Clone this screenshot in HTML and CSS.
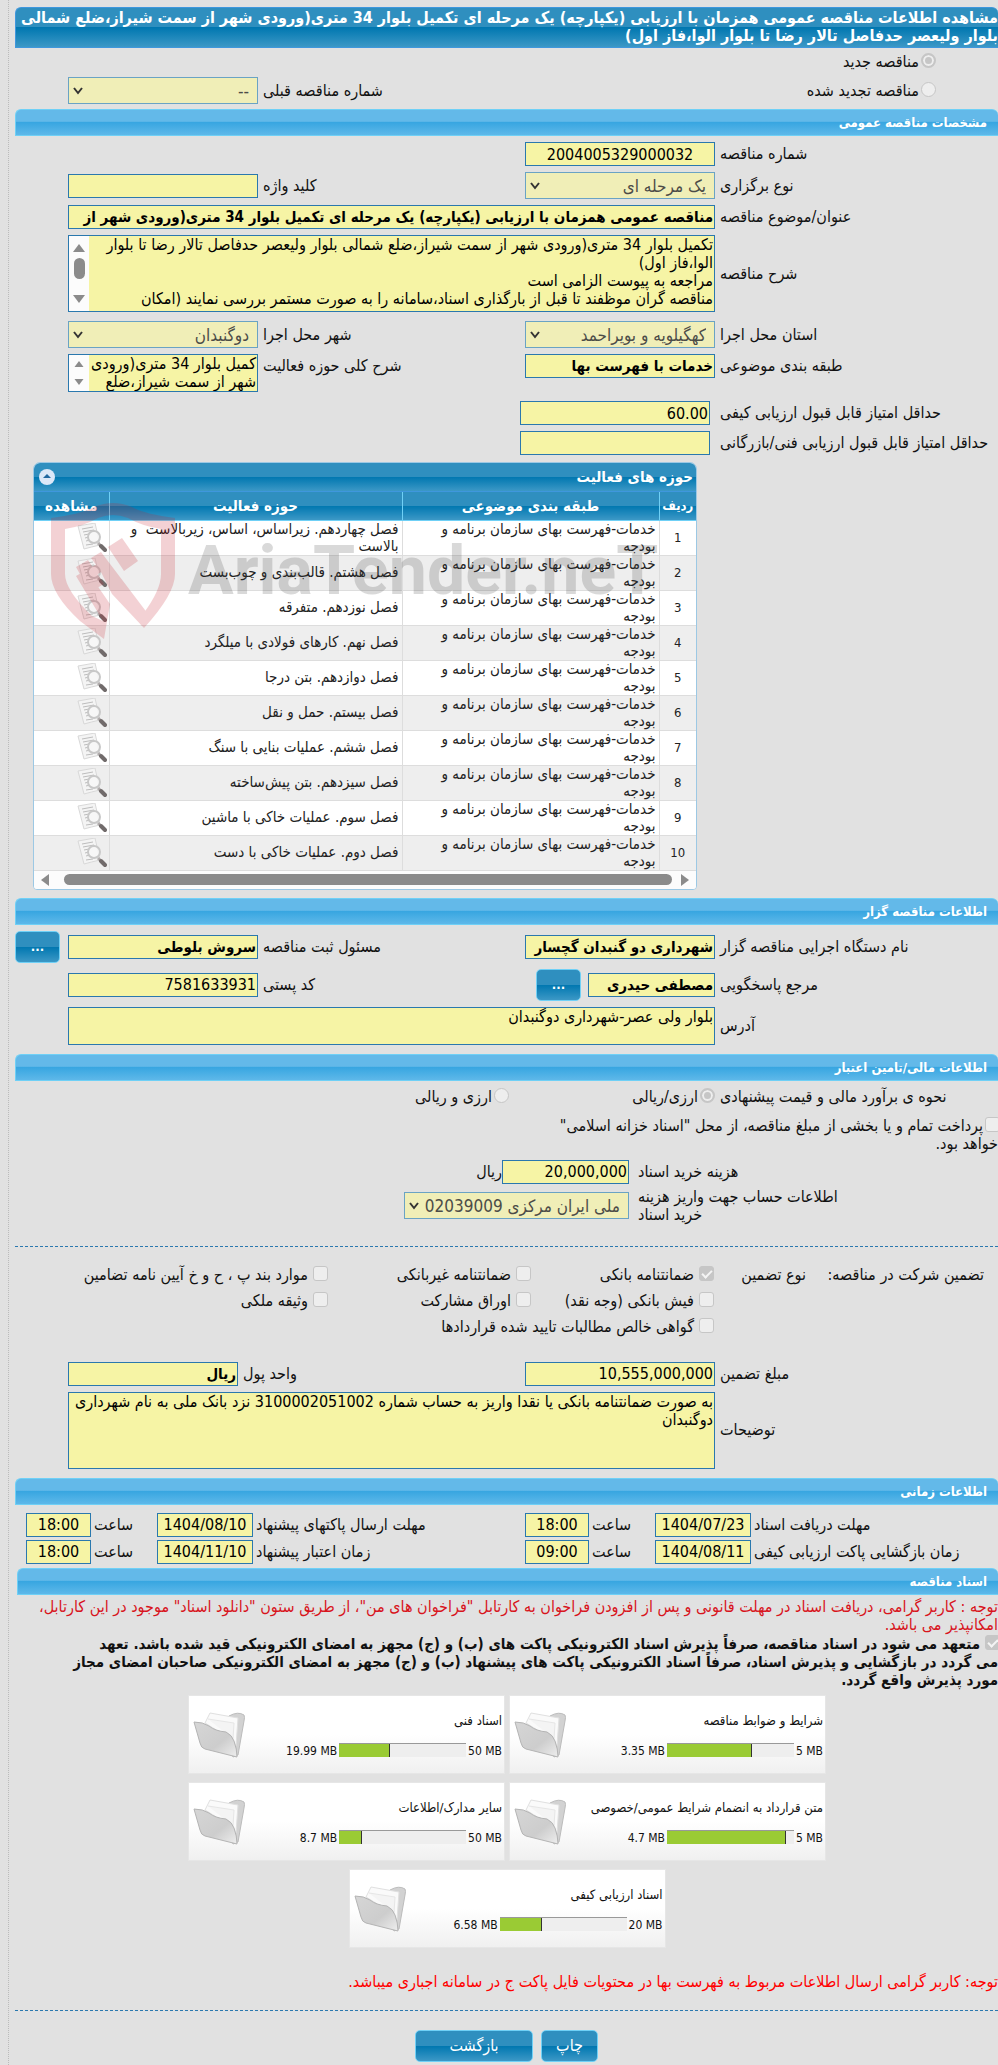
FILE: index.html
```html
<!doctype html>
<html lang="fa" dir="rtl">
    <head>
        <meta charset="utf-8">
        <title>مشاهده اطلاعات مناقصه</title>
        <link rel="stylesheet" href="styles.css">
    </head>

    <body>

        <svg class="defs" aria-hidden="true">
            <defs>
                <linearGradient id="g-folder" x1="0" y1="0" x2="1" y2="1">
                    <stop offset="0" stop-color="#d6d6d6"/>
                    <stop offset="0.6" stop-color="#cdcdcd"/>
                    <stop offset="1" stop-color="#eee"/>
                </linearGradient>
                <symbol id="i-view" viewBox="0 0 30 30">
                    <path d="M1 3 L18 0 L23 22 Q14 24 7 26 Z" fill="#f4f4f4" stroke="#d8d8d8"/>
                    <path d="M5 6 L16 4 M6 9 L17 7 M7 12 L12 11 M8 15 L12 14 M9 18 L13 17 M9 22 L16 21" stroke="#bdbdbd" fill="none"/>
                    <circle cx="17" cy="14" r="6" fill="#f8f8f8" fill-opacity=".8" stroke="#c8c8c8" stroke-width="2"/>
                    <path d="M21 20 L24 23" stroke="#b0acac" stroke-width="3"/>
                    <path d="M24 23 L28 27" stroke="#716b6b" stroke-width="4" stroke-linecap="round"/>
                </symbol>
                <symbol id="i-folder" viewBox="0 0 54 48">
                    <path d="M36 5 Q45 0 51 4 Q52 6 51 10 L45 44 L40 46 L30 20 Z" fill="#d2d2d2" stroke="#bcbcbc"/>
                    <path d="M12 12 L17 2 L45 7 L43 35 L38 28 Z" fill="#fafafa" stroke="#e0e0e0"/>
                    <path d="M15 8 L41 12 L40 28" fill="#f4f4f4" stroke="#e6e6e6"/>
                    <path d="M1 11 Q10 11 16 15 Q22 20 33 21 Q39 24 41 30 Q44 38 44 46 L12 38 Q8 37 7 32 Z" fill="url(#g-folder)" stroke="#b4b4b4"/>
                </symbol>
                <symbol id="i-arrow" viewBox="0 0 12 8">
                    <path d="M2 1 L6 6 L10 1" fill="none" stroke="#333" stroke-width="2"/>
                </symbol>
                <symbol id="i-up" viewBox="0 0 12 8">
                    <path d="M0 8 L6 0 L12 8 Z" fill="#8b8b8b"/>
                </symbol>
                <symbol id="i-down" viewBox="0 0 12 8">
                    <path d="M0 0 L6 8 L12 0 Z" fill="#8b8b8b"/>
                </symbol>
            </defs>
        </svg>

        <div id="sayfa">
            <h1 class="title">مشاهده اطلاعات مناقصه عمومی همزمان با ارزیابی (یکپارچه) یک مرحله ای تکمیل بلوار 34 متری(ورودی شهر از سمت شیراز،ضلع شمالی بلوار ولیعصر حدفاصل تالار رضا تا بلوار الوا،فاز اول)</h1>

            <div class="kind">
                <label class="radio"><input type="radio" name="kind" checked disabled>مناقصه جدید</label>
            </div>
            <div class="row kind2">
                <label class="radio"><input type="radio" name="kind" disabled>مناقصه تجدید شده</label>
                <label class="lb2" for="prev">شماره مناقصه قبلی</label>
                <div class="sel"><select id="prev" disabled><option>--</option></select><svg><use href="#i-arrow"/></svg></div>
            </div>

            <h2 class="bar">مشخصات مناقصه عمومی</h2>
            <div class="form">
                <div class="row">
                    <label class="lb" for="no">شماره مناقصه</label>
                    <input class="center" id="no" value="2004005329000032" readonly>
                </div>
                <div class="row">
                    <label class="lb" for="type">نوع برگزاری</label>
                    <div class="sel"><select id="type" disabled><option>یک مرحله ای</option></select><svg><use href="#i-arrow"/></svg></div>
                    <label class="lb2" for="key">کلید واژه</label>
                    <input id="key" readonly>
                </div>
                <div class="row">
                    <label class="lb" for="subject">عنوان/موضوع مناقصه</label>
                    <input class="wide strong" id="subject" value="مناقصه عمومی همزمان با ارزیابی (یکپارچه) یک مرحله ای تکمیل بلوار 34 متری(ورودی شهر از" readonly>
                </div>
                <div class="row gap-b">
                    <label class="lb" for="desc">شرح مناقصه</label>
                    <div class="scrolled tall wide">
                        <textarea id="desc" readonly>تکمیل بلوار 34 متری(ورودی شهر از سمت شیراز،ضلع شمالی بلوار ولیعصر حدفاصل تالار رضا تا بلوار الوا،فاز اول)
مراجعه به پیوست الزامی است
مناقصه گران موظفند تا قبل از بارگذاری اسناد،سامانه را به صورت مستمر بررسی نمایند (امکان</textarea>
                        <div class="track"><svg><use href="#i-up"/></svg><i></i><svg><use href="#i-down"/></svg></div>
                    </div>
                </div>
                <div class="row">
                    <label class="lb" for="state">استان محل اجرا</label>
                    <div class="sel"><select id="state" disabled><option>کهگیلویه و بویراحمد</option></select><svg><use href="#i-arrow"/></svg></div>
                    <label class="lb2" for="city">شهر محل اجرا</label>
                    <div class="sel"><select id="city" disabled><option>دوگنبدان</option></select><svg><use href="#i-arrow"/></svg></div>
                </div>
                <div class="row top gap-b">
                    <label class="lb" for="cat">طبقه بندی موضوعی</label>
                    <input class="strong" id="cat" value="خدمات با فهرست بها" readonly>
                    <label class="lb2" for="field">شرح کلی حوزه فعالیت</label>
                    <div class="scrolled short">
                        <textarea id="field" readonly>کمیل بلوار 34 متری(ورودی شهر از سمت شیراز،ضلع</textarea>
                        <div class="track small"><svg><use href="#i-up"/></svg><svg><use href="#i-down"/></svg></div>
                    </div>
                </div>
                <div class="row score">
                    <label class="lb" for="q1">حداقل امتیاز قابل قبول ارزیابی کیفی</label>
                    <input id="q1" value="60.00" readonly>
                </div>
                <div class="row score">
                    <label class="lb" for="q2">حداقل امتیاز قابل قبول ارزیابی فنی/بازرگانی</label>
                    <input id="q2" readonly>
                </div>
            </div>

            <div class="grid">
                <div class="grid-title">
                    <span>حوزه های فعالیت</span>
                    <button class="fold" aria-label="بستن"><svg viewBox="0 0 16 16"><path d="M4 9 L8 5 L12 9 Z" fill="#2268a0"/></svg></button>
                </div>
                <table>
                    <thead>
                        <tr><th class="t-no">ردیف</th><th class="t-cat">طبقه بندی موضوعی</th><th>حوزه فعالیت</th><th class="t-view">مشاهده</th></tr>
                    </thead>
                    <tbody>
                        <tr><td>1</td><td>خدمات-فهرست بهای سازمان برنامه و بودجه</td><td>فصل چهاردهم. زیراساس، اساس، زیربالاست &nbsp;و بالاست</td><td><svg><use href="#i-view"/></svg></td></tr>
                        <tr><td>2</td><td>خدمات-فهرست بهای سازمان برنامه و بودجه</td><td>فصل هشتم. قالب‌بندی و چوب‌بست</td><td><svg><use href="#i-view"/></svg></td></tr>
                        <tr><td>3</td><td>خدمات-فهرست بهای سازمان برنامه و بودجه</td><td>فصل نوزدهم. متفرقه</td><td><svg><use href="#i-view"/></svg></td></tr>
                        <tr><td>4</td><td>خدمات-فهرست بهای سازمان برنامه و بودجه</td><td>فصل نهم. کارهای فولادی با میلگرد</td><td><svg><use href="#i-view"/></svg></td></tr>
                        <tr><td>5</td><td>خدمات-فهرست بهای سازمان برنامه و بودجه</td><td>فصل دوازدهم. بتن درجا</td><td><svg><use href="#i-view"/></svg></td></tr>
                        <tr><td>6</td><td>خدمات-فهرست بهای سازمان برنامه و بودجه</td><td>فصل بیستم. حمل و نقل</td><td><svg><use href="#i-view"/></svg></td></tr>
                        <tr><td>7</td><td>خدمات-فهرست بهای سازمان برنامه و بودجه</td><td>فصل ششم. عملیات بنایی با سنگ</td><td><svg><use href="#i-view"/></svg></td></tr>
                        <tr><td>8</td><td>خدمات-فهرست بهای سازمان برنامه و بودجه</td><td>فصل سیزدهم. بتن پیش‌ساخته</td><td><svg><use href="#i-view"/></svg></td></tr>
                        <tr><td>9</td><td>خدمات-فهرست بهای سازمان برنامه و بودجه</td><td>فصل سوم. عملیات خاکی با ماشین</td><td><svg><use href="#i-view"/></svg></td></tr>
                        <tr><td>10</td><td>خدمات-فهرست بهای سازمان برنامه و بودجه</td><td>فصل دوم. عملیات خاکی با دست</td><td><svg><use href="#i-view"/></svg></td></tr>
                    </tbody>
                </table>
                <div class="hscroll">
                    <svg viewBox="0 0 8 12"><path d="M0 0 L8 6 L0 12 Z" fill="#8b8b8b"/></svg>
                    <i></i>
                    <svg viewBox="0 0 8 12"><path d="M8 0 L0 6 L8 12 Z" fill="#8b8b8b"/></svg>
                </div>
                <!-- watermark over the table -->
                <div class="mark">
                    <svg viewBox="0 0 126 138">
                        <path fill="#c8202c" fill-rule="evenodd" d="M1 16 Q32 12 44 5 Q63 -3 82 5 Q94 12 125 16 V72 Q125 92 94 126 L62 92 L51 70 L42 76 L60 102 L54 137 L30 119 Q1 92 1 72 Z M15 27 V72 Q15 88 42 114 L53 119 L26 74 L47 62 L66 82 L93 112 Q111 88 111 72 V27 Q92 24 78 16 Q63 10 48 16 Q34 24 15 27 Z"/>
                        <path fill="#c8202c" d="M58 45 L72 36 L88 59 L74 69 Z M41 56 L51 50 L98 112 L92 124 Z M26 65 L38 58 L54 82 L40 90 Z"/>
                    </svg>
                    <span dir="ltr">AriaTender.neT</span>
                </div>
            </div>

            <h2 class="bar">اطلاعات مناقصه گزار</h2>
            <div class="form">
                <div class="row">
                    <label class="lb" for="org">نام دستگاه اجرایی مناقصه گزار</label>
                    <input class="strong" id="org" value="شهرداری دو گنبدان گچسار" readonly>
                    <label class="lb2" for="owner">مسئول ثبت مناقصه</label>
                    <input class="strong" id="owner" value="سروش بلوطی" readonly>
                    <button class="dots">...</button>
                </div>
                <div class="row">
                    <label class="lb" for="ref">مرجع پاسخگویی</label>
                    <div class="pair"><input class="strong" id="ref" value="مصطفی حیدری" readonly><button class="dots">...</button></div>
                    <label class="lb2" for="post">کد پستی</label>
                    <input id="post" value="7581633931" readonly>
                </div>
                <div class="row gap-b">
                    <label class="lb" for="addr">آدرس</label>
                    <textarea class="short wide" id="addr" readonly>بلوار ولی عصر-شهرداری دوگنبدان</textarea>
                </div>
            </div>

            <h2 class="bar">اطلاعات مالی/تامین اعتبار</h2>
            <div class="row money">
                <span class="lb">نحوه ی برآورد مالی و قیمت پیشنهادی</span>
                <label class="radio"><input type="radio" name="cur" checked disabled>ارزی/ریالی</label>
                <label class="radio"><input type="radio" name="cur" disabled>ارزی و ریالی</label>
            </div>
            <label class="treasury"><input type="checkbox" disabled>پرداخت تمام و یا بخشی از مبلغ مناقصه، از محل "اسناد خزانه اسلامی" خواهد بود.</label>
            <div class="cost">
                <label for="price">هزینه خرید اسناد</label>
                <div class="pair tight"><input id="price" value="20,000,000" readonly><span>ریال</span></div>
                <label for="acc">اطلاعات حساب جهت واریز هزینه خرید اسناد</label>
                <div class="sel"><select id="acc" disabled><option>ملی ایران مرکزی 02039009</option></select><svg><use href="#i-arrow"/></svg></div>
            </div>
            <hr>

            <div class="guarantee">
                <span class="g-title">تضمین شرکت در مناقصه:</span>
                <span class="g-kind">نوع تضمین</span>
                <div class="checks">
                    <label><input type="checkbox" checked disabled>ضمانتنامه بانکی</label>
                    <label><input type="checkbox" disabled>ضمانتنامه غیربانکی</label>
                    <label><input type="checkbox" disabled>موارد بند پ ، ح و خ آیین نامه تضامین</label>
                    <label><input type="checkbox" disabled>فیش بانکی (وجه نقد)</label>
                    <label><input type="checkbox" disabled>اوراق مشارکت</label>
                    <label><input type="checkbox" disabled>وثیقه ملکی</label>
                    <label class="all"><input type="checkbox" disabled>گواهی خالص مطالبات تایید شده قراردادها</label>
                </div>
            </div>
            <div class="form">
                <div class="row unit">
                    <label class="lb" for="amount">مبلغ تضمین</label>
                    <input id="amount" value="10,555,000,000" readonly>
                    <label class="lb2" for="unit">واحد پول</label>
                    <input class="strong" id="unit" value="ریال" readonly>
                </div>
                <div class="row gap-b">
                    <label class="lb" for="note">توضیحات</label>
                    <textarea class="tall wide" id="note" readonly>به صورت ضمانتنامه بانکی یا نقدا واریز به حساب شماره 3100002051002 نزد بانک ملی به نام شهرداری دوگنبدان</textarea>
                </div>
            </div>

            <h2 class="bar">اطلاعات زمانی</h2>
            <div class="times">
                <label for="d1">مهلت دریافت اسناد</label><input id="d1" value="1404/07/23" readonly>
                <label for="h1">ساعت</label><input id="h1" value="18:00" readonly>
                <label for="d2">مهلت ارسال پاکتهای پیشنهاد</label><input id="d2" value="1404/08/10" readonly>
                <label for="h2">ساعت</label><input id="h2" value="18:00" readonly>
                <label for="d3">زمان بازگشایی پاکت ارزیابی کیفی</label><input id="d3" value="1404/08/11" readonly>
                <label for="h3">ساعت</label><input id="h3" value="09:00" readonly>
                <label for="d4">زمان اعتبار پیشنهاد</label><input id="d4" value="1404/11/10" readonly>
                <label for="h4">ساعت</label><input id="h4" value="18:00" readonly>
            </div>

            <h2 class="bar docs">اسناد مناقصه</h2>
            <p class="warn">توجه : کاربر گرامی، دریافت اسناد در مهلت قانونی و پس از افزودن فراخوان به کارتابل "فراخوان های من"، از طریق ستون "دانلود اسناد" موجود در این کارتابل، امکانپذیر می باشد.</p>
            <label class="promise"><input type="checkbox" checked disabled>متعهد می شود در اسناد مناقصه، صرفاً پذیرش اسناد الکترونیکی پاکت های (ب) و (ج) مجهز به امضای الکترونیکی قید شده باشد. تعهد<br>می گردد در بازگشایی و پذیرش اسناد، صرفاً اسناد الکترونیکی پاکت های پیشنهاد (ب) و (ج) مجهز به امضای الکترونیکی صاحبان امضای مجاز<br>مورد پذیرش واقع گردد.</label>

            <div class="files">
                <div class="file">
                    <div class="info"><a href="#">شرایط و ضوابط مناقصه</a><div class="size"><span>5 MB</span><div class="meter"><i style="width:67%"></i></div><span>3.35 MB</span></div></div>
                    <svg><use href="#i-folder"/></svg>
                </div>
                <div class="file">
                    <div class="info"><a href="#">اسناد فنی</a><div class="size"><span>50 MB</span><div class="meter"><i style="width:40%"></i></div><span>19.99 MB</span></div></div>
                    <svg><use href="#i-folder"/></svg>
                </div>
                <div class="file">
                    <div class="info"><a href="#">متن قرارداد به انضمام شرایط عمومی/خصوصی</a><div class="size"><span>5 MB</span><div class="meter"><i style="width:94%"></i></div><span>4.7 MB</span></div></div>
                    <svg><use href="#i-folder"/></svg>
                </div>
                <div class="file">
                    <div class="info"><a href="#">سایر مدارک/اطلاعات</a><div class="size"><span>50 MB</span><div class="meter"><i style="width:18%"></i></div><span>8.7 MB</span></div></div>
                    <svg><use href="#i-folder"/></svg>
                </div>
                <div class="file">
                    <div class="info"><a href="#">اسناد ارزیابی کیفی</a><div class="size"><span>20 MB</span><div class="meter"><i style="width:33%"></i></div><span>6.58 MB</span></div></div>
                    <svg><use href="#i-folder"/></svg>
                </div>
            </div>

            <p class="warn last">توجه: کاربر گرامی ارسال اطلاعات مربوط به فهرست بها در محتویات فایل پاکت ج در سامانه اجباری میباشد.</p>
            <hr>
            <div class="buttons">
                <button class="print">چاپ</button>
                <button class="back">بازگشت</button>
            </div>
        </div>

    </body>
</html>
```
FILE: styles.css
```css
*{
    box-sizing: border-box;
}
body{
    margin: 0px;
    background-color: #e1e1e1;
    color: #111;
    font-family: Tahoma, "DejaVu Sans Condensed", "DejaVu Sans", sans-serif;
    font-size: 16px;
    line-height: 18px;
}
.defs{
    position: absolute;
    width: 0px;
    height: 0px;
}
#sayfa{
    margin-left: 8px;
    padding: 7px 0px 5px 6px;
    border-left: 1px dotted #bbb;
}
h1, h2, p{
    margin: 0px;
}
.title{
    padding: 1px 0px 2px;
    color: white;
    font-size: 16px;
    line-height: 18px;
    background: linear-gradient(#2f8fbf 50%, #0077b0 50%, #3c98c6);
    border: 1px solid #3f97dd;
    border-right: 0px;
    border-radius: 6px 6px 0px 0px;
}
.bar{
    height: 27px;
    padding-right: 11px;
    color: white;
    font-size: 13px;
    line-height: 26px;
    background: linear-gradient(#63b9e9 45%, #38a6e1 50%, #5eb8e9);
    border: 1px solid #6fd0f6;
    border-right: 0px;
    border-radius: 6px 6px 0px 0px;
}

/* fields */
input, textarea, select{
    margin: 0px;
    padding: 0px 1px;
    color: #000;
    font-family: inherit;
    font-size: 16px;
    background-color: #f6f4a5;
    border: 1px solid #2a78ae;
    border-radius: 0px;
    outline: none;
}
input{
    width: 100%;
    height: 24px;
}
textarea{
    display: block;
    width: 100%;
    line-height: 18px;
    resize: none;
    overflow: hidden;
}
input[type=radio], input[type=checkbox]{
    appearance: none;
    flex: none;
    width: 15px;
    height: 15px;
    padding: 0px;
    background-color: #eee;
    border: 1px solid #c6c6c6;
    border-radius: 3px;
}
input[type=radio]{
    border-radius: 50%;
}
input[type=radio]:checked{
    background-color: #c6c6c6;
    border: 2px solid #c6c6c6;
    box-shadow: inset 0px 0px 0px 2px #eee;
}
input[type=checkbox]:checked{
    background-color: #c6c6c6;
}
input[type=checkbox]:checked::after{
    content: "";
    display: block;
    width: 4px;
    height: 8px;
    margin: 1px auto;
    border: solid #f4f4f4;
    border-width: 0px 2px 2px 0px;
    transform: rotate(45deg);
}
.center{
    text-align: center;
}
.strong{
    font-size: 15px;
    font-weight: bold;
}
.sel{
    position: relative;
    height: 27px;
}
.sel select{
    appearance: none;
    width: 100%;
    height: 100%;
    padding: 0px 8px 0px 20px;
    color: #4c4c48;
    font-size: 17px;
    background-color: #f0eeb7;
    border-color: #6aa3c4;
    opacity: 1;
}
.sel svg{
    position: absolute;
    left: 4px;
    top: 10px;
    width: 12px;
    height: 8px;
}
.scrolled{
    display: flex;
    border: 1px solid #2a78ae;
}
.scrolled textarea{
    flex: 1;
    min-width: 0px;
    border: 0px;
}
.track{
    width: 20px;
    padding: 8px 4px;
    display: flex;
    flex-direction: column;
    justify-content: space-between;
    align-items: center;
    background-color: #fcfcfc;
}
.track svg{
    width: 12px;
    height: 8px;
}
.track i{
    width: 11px;
    height: 21px;
    margin-bottom: 10px;
    border-radius: 6px;
    background-color: #8b8b8b;
}
.track.small svg{
    width: 10px;
    height: 6px;
}
.track.small{
    padding: 6px 4px;
}
.tall{
    height: 77px;
}
.short{
    height: 38px;
}

/* rows */
.row{
    display: grid;
    grid-template-columns: 278px 190px 1fr 190px 48px;
    column-gap: 5px;
    align-items: center;
}
.form{
    display: flex;
    flex-direction: column;
    gap: 6px;
    padding: 6px 0px;
}
.wide{
    grid-column: 2 / 5;
}
.gap-b{
    margin-bottom: 3px;
}
.top{
    align-items: start;
}
.top label{
    padding-top: 3px;
}
.lb, .lb2{
    text-align: left;
}
.score{
    grid-template-columns: 278px 190px;
    column-gap: 10px;
}
.pair{
    display: flex;
    align-items: center;
    gap: 7px;
}
.pair input{
    width: 127px;
}
.kind, .kind2 .radio{
    padding-right: 62px;
}
.kind{
    padding-top: 5px;
    margin-bottom: 6px;
}
.kind2{
    margin-bottom: 5px;
}
.kind2 .lb2{
    grid-column: 3;
}
.radio{
    display: flex;
    gap: 2px;
    white-space: nowrap;
}
.row .dots{
    width: 45px;
    margin-right: 3px;
}
.pair .dots{
    margin-right: 0px;
}
button{
    height: 32px;
    padding: 0px;
    color: white;
    font-family: inherit;
    font-size: 16px;
    background: linear-gradient(#2f8fbf 50%, #0077b0 50%, #3c98c6);
    border: 1px solid #6fd0f6;
    border-radius: 5px;
}
.dots{
    font-size: 13px;
    font-weight: bold;
}

/* activity table */
.grid{
    position: relative;
    width: 664px;
    max-width: 68%;
    margin: 1px auto 8px 18px;
    border: 1px solid #9cc8e4;
    border-radius: 7px 7px 4px 4px;
    overflow: hidden;
    background-color: #fff;
}
.grid-title{
    height: 29px;
    padding: 0px 3px 0px 5px;
    display: flex;
    justify-content: space-between;
    align-items: center;
    color: white;
    font-size: 15px;
    font-weight: bold;
    background: linear-gradient(#2f8fbf 50%, #0077b0 50%, #3c98c6);
    border-bottom: 1px solid #3f97dd;
}
.fold{
    width: 16px;
    height: 16px;
    background: #dce8f8;
    border: 0px;
    border-radius: 50%;
}
.fold svg{
    display: block;
}
.grid table{
    width: 100%;
    table-layout: fixed;
    border-collapse: collapse;
}
.grid th{
    height: 28px;
    padding: 0px;
    color: white;
    font-size: 15px;
    white-space: nowrap;
    background: linear-gradient(#2f8fbf 50%, #0077b0 50%, #3c98c6);
    border-left: 1px solid #6fd0f6;
    border-bottom: 1px solid #6fd0f6;
}
.grid th:last-child, .grid td:last-child{
    border-left: 0px;
}
.grid th.t-no{
    width: 37px;
    font-size: 13px;
}
.t-cat{
    width: 257px;
}
.t-view{
    width: 75px;
}
.grid td{
    height: 35px;
    padding: 0px 3px 0px 12px;
    color: #222;
    font-size: 15px;
    line-height: 17px;
    border-left: 1px solid #ddd;
    border-bottom: 1px solid #ddd;
}
.grid td:nth-child(2){
    padding-left: 30px;
}
.grid td:first-child{
    padding: 0px;
    font-size: 13px;
    text-align: center;
}
.grid td:last-child{
    padding: 0px 2px;
}
.grid tr:nth-child(even) td{
    background-color: #eee;
}
.grid td svg{
    display: block;
    width: 30px;
    height: 30px;
}
.hscroll{
    height: 18px;
    padding: 0px 7px;
    display: flex;
    align-items: center;
    gap: 9px;
    background-color: #fcfcfc;
}
.hscroll svg{
    width: 8px;
    height: 12px;
}
.hscroll i{
    flex: 1;
    height: 11px;
    margin-left: 6px;
    border-radius: 6px;
    background-color: #8b8b8b;
}
.mark{
    position: absolute;
    left: 16px;
    top: 39px;
    display: flex;
    direction: ltr;
    align-items: center;
    gap: 12px;
    opacity: 0.2;
    pointer-events: none;
}
.mark svg{
    width: 126px;
    height: 138px;
}
.mark span{
    color: #444;
    font-family: Roboto, sans-serif;
    font-size: 68px;
    font-weight: bold;
    line-height: 110px;
}

/* money */
.money{
    padding-top: 7px;
    grid-template-columns: 278px 201px 1fr;
}
.treasury{
    display: flow-root;
    width: 460px;
    padding: 11px 0px 7px;
}
.treasury input{
    float: right;
    margin-left: 2px;
    margin-right: -2px;
}
.cost{
    display: grid;
    grid-template-columns: 210px 225px;
    column-gap: 9px;
    row-gap: 4px;
    padding-right: 150px;
    align-items: center;
}
.cost label{
    text-align: left;
}
.tight{
    gap: 0px;
}
hr{
    height: 0px;
    margin: 22px 0px 18px;
    border: 0px;
    border-top: 1px dashed #2a78ae;
}
.guarantee{
    display: flex;
    padding-right: 14px;
    margin-bottom: 20px;
}
.g-title, .g-kind{
    width: 178px;
    padding-top: 1px;
}
.g-kind{
    width: 92px;
}
.checks{
    display: grid;
    grid-template-columns: 183px 203px auto;
    row-gap: 7px;
}
.checks label{
    display: flex;
    gap: 5px;
    padding-top: 1px;
    white-space: nowrap;
}
.checks .all{
    grid-column: 1 / 4;
}
.unit{
    grid-template-columns: 278px 190px 1fr 170px 48px;
}

/* times */
.times{
    display: grid;
    grid-template-columns: 247px 96px 66px 64px 1fr 96px 66px 65px;
    row-gap: 3px;
    padding: 8px 0px 4px 11px;
    align-items: center;
}
.times label{
    padding-left: 3px;
    text-align: left;
}
.times input{
    text-align: center;
}
.docs{
    margin-left: 2px;
}
.warn{
    padding: 3px 0px 1px 12px;
    color: #d8141c;
}
.promise{
    display: block;
    font-size: 15px;
    font-weight: bold;
}
.promise input{
    float: right;
    margin: 0px -2px 0px 5px;
}

/* files */
.files{
    display: flex;
    flex-wrap: wrap;
    justify-content: center;
    gap: 8px 4px;
    width: 640px;
    margin: 6px auto 25px 172px;
}
.file{
    width: 317px;
    height: 79px;
    padding: 15px 2px 0px 4px;
    display: flex;
    justify-content: space-between;
    background: linear-gradient(#fff 50%, #f0f0f0);
    border: 1px solid #e6e6e6;
}
.file > svg{
    width: 54px;
    height: 48px;
}
.file a{
    color: #111;
    font-size: 13px;
    text-decoration: none;
}
.size{
    display: flex;
    gap: 2px;
    margin-top: 13px;
    font-size: 12px;
    direction: rtl;
}
.size span{
    direction: ltr;
    line-height: 16px;
}
.meter{
    display: flex;
    direction: ltr;
    width: 127px;
    height: 14px;
    background-color: #eee;
    border-top: 1px solid #999;
}
.meter i{
    background-color: #9acb34;
    border-right: 1px solid #333;
}
.last{
    padding: 0px 0px 1px;
    color: #f00;
}
.last + hr{
    margin: 18px 0px 19px;
}
.buttons{
    display: flex;
    justify-content: center;
    gap: 8px;
}
.print{
    width: 57px;
}
.back{
    width: 118px;
}
```
